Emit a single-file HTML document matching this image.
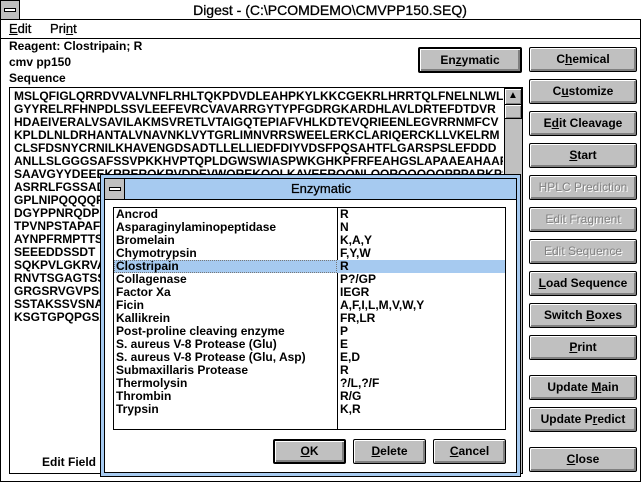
<!DOCTYPE html>
<html><head><style>
*{margin:0;padding:0;box-sizing:border-box}
body{width:641px;height:482px;background:#fff;position:relative;overflow:hidden;font-family:"Liberation Sans",Arial,sans-serif;font-weight:bold;font-size:12px;color:#000}
.a{position:absolute}
.btn{position:absolute;background:#c0c0c0;border:1px solid #000;border-radius:2px;box-shadow:inset 1px 1px 0 #fff,inset -2px -2px 0 #808080;text-align:center;font-size:12px;line-height:22px}
.dis{color:#808080;font-weight:normal;text-shadow:1px 1px 0 #fff}
.seq div{height:13px;line-height:13px;white-space:nowrap}
.lst div{height:13px;line-height:13px;white-space:nowrap}
u{text-decoration:underline}
</style></head><body>
<!-- main frame -->
<div class="a" style="left:0;top:0;width:641px;height:482px;border:1px solid #000"></div>
<div class="a" style="left:0;top:0;width:641px;height:20px;border-bottom:1px solid #000;background:#fff"></div>
<div class="a" style="left:0;top:0;width:20px;height:20px;background:#c0c0c0;border:1px solid #000"></div>
<div class="a" style="left:4px;top:8px;width:12px;height:4px;background:#fff;border:1px solid #000"></div>
<div class="a" style="left:20px;top:0;width:620px;height:19px;text-align:center;font-size:14px;font-weight:normal;line-height:20px;-webkit-text-stroke:0.3px #000">Digest - (C:\PCOMDEMO\CMVPP150.SEQ)</div>
<div class="a" style="left:9px;top:21px;font-size:13px;font-weight:normal;-webkit-text-stroke:0.3px #000"><u>E</u>dit</div>
<div class="a" style="left:50px;top:21px;font-size:13px;font-weight:normal;-webkit-text-stroke:0.3px #000">Pri<u>n</u>t</div>
<div class="a" style="left:0;top:38px;width:641px;height:1px;background:#000"></div>
<div class="a" style="left:9px;top:39px">Reagent: Clostripain; R</div>
<div class="a" style="left:9px;top:55px">cmv pp150</div>
<div class="a" style="left:9px;top:71px">Sequence</div>
<!-- sequence box -->
<div class="a" style="left:9px;top:87px;width:514px;height:387px;border:1px solid #000"></div>
<div class="a seq" style="left:14px;top:90px;width:489px;overflow:hidden">
<div>MSLQFIGLQRRDVVALVNFLRHLTQKPDVDLEAHPKYLKKCGEKRLHRRTQLFNELNLWL</div>
<div>GYYRELRFHNPDLSSVLEEFEVRCVAVARRGYTYPFGDRGKARDHLAVLDRTEFDTDVR</div>
<div>HDAEIVERALVSAVILAKMSVRETLVTAIGQTEPIAFVHLKDTEVQRIEENLEGVRRNMFCV</div>
<div>KPLDLNLDRHANTALVNAVNKLVYTGRLIMNVRRSWEELERKCLARIQERCKLLVKELRM</div>
<div>CLSFDSNYCRNILKHAVENGDSADTLLELLIEDFDIYVDSFPQSAHTFLGARSPSLEFDDD</div>
<div>ANLLSLGGGSAFSSVPKKHVPTQPLDGWSWIASPWKGHKPFRFEAHGSLAPAAEAHAAR</div>
<div>SAAVGYYDEEEKRREROKRVDDEVWQREKQQLKAVEERQQNLQQRQQQQQPPPARKPS</div>
<div>ASRRLFGSSAD</div><div>GPLNIPQQQQF</div><div>DGYPPNRQDP</div><div>TPVNPSTAPAF</div>
<div>AYNPFRMPTTS</div><div>SEEEDDSSDT</div><div>SQKPVLGKRVA</div><div>RNVTSGAGTSS</div>
<div>GRGSRVGVPSI</div><div>SSTAKSSVSNA</div><div>KSGTGPQPGSA</div>
</div>
<div class="a" style="left:42px;top:455px">Edit Field</div>
<!-- scrollbar -->
<div class="a" style="left:504px;top:88px;width:18px;height:385px;background:#c0c0c0;border-left:1px solid #000"></div>
<div class="a" style="left:504px;top:88px;width:18px;height:17px;background:#c0c0c0;border:1px solid #000;box-shadow:inset 1px 1px 0 #fff,inset -1px -1px 0 #808080;text-align:center;font-size:10px;line-height:14px">&#9650;</div>
<div class="a" style="left:504px;top:104px;width:18px;height:15px;background:#c0c0c0;border:1px solid #000;box-shadow:inset 1px 1px 0 #fff,inset -1px -1px 0 #808080"></div>
<!-- buttons -->
<div class="btn" style="left:418px;top:47px;width:104px;height:26px;border-width:2px;line-height:22px">En<u>z</u>ymatic</div>
<div class="btn" style="left:529px;top:47px;width:108px;height:25px"><span>C<u>h</u>emical</span></div>
<div class="btn" style="left:529px;top:79px;width:108px;height:25px">C<u>u</u>stomize</div>
<div class="btn" style="left:529px;top:111px;width:108px;height:25px">E<u>d</u>it Cleavage</div>
<div class="btn" style="left:529px;top:143px;width:108px;height:25px"><u>S</u>tart</div>
<div class="btn dis" style="left:529px;top:175px;width:108px;height:25px">HPLC Prediction</div>
<div class="btn dis" style="left:529px;top:207px;width:108px;height:25px">Edit Fragment</div>
<div class="btn dis" style="left:529px;top:239px;width:108px;height:25px">Edit Sequence</div>
<div class="btn" style="left:529px;top:271px;width:108px;height:25px"><u>L</u>oad Sequence</div>
<div class="btn" style="left:529px;top:303px;width:108px;height:25px">Switch <u>B</u>oxes</div>
<div class="btn" style="left:529px;top:335px;width:108px;height:25px"><u>P</u>rint</div>
<div class="btn" style="left:529px;top:375px;width:108px;height:25px">Update <u>M</u>ain</div>
<div class="btn" style="left:529px;top:407px;width:108px;height:25px">Update P<u>r</u>edict</div>
<div class="btn" style="left:529px;top:447px;width:108px;height:25px"><u>C</u>lose</div>
<!-- dialog -->
<div class="a" style="left:100px;top:174px;width:421px;height:303px;background:#a6caf0;border:1px solid #000"></div>
<div class="a" style="left:104px;top:178px;width:413px;height:295px;background:#fff;border:1px solid #000"></div>
<div class="a" style="left:104px;top:178px;width:413px;height:22px;background:#a6caf0;border:1px solid #000"></div>
<div class="a" style="left:104px;top:178px;width:21px;height:22px;background:#c0c0c0;border:1px solid #000"></div>
<div class="a" style="left:109px;top:187px;width:12px;height:4px;background:#fff;border:1px solid #000"></div>
<div class="a" style="left:125px;top:180px;width:392px;text-align:center;font-size:13px;font-weight:normal;-webkit-text-stroke:0.3px #000;line-height:18px">Enzymatic</div>
<div class="a" style="left:113px;top:207px;width:393px;height:223px;border:1px solid #000"></div>
<div class="a" style="left:337px;top:207px;width:1px;height:223px;background:#000"></div>
<div class="a" style="left:114px;top:260px;width:391px;height:13px;background:#a6caf0"></div>
<div class="a" style="left:114px;top:260px;width:223px;height:13px;border:1px dotted #777"></div>
<div class="a lst" style="left:116px;top:208px">
<div>Ancrod</div><div>Asparaginylaminopeptidase</div><div>Bromelain</div><div>Chymotrypsin</div><div>Clostripain</div><div>Collagenase</div><div>Factor Xa</div><div>Ficin</div><div>Kallikrein</div><div>Post-proline cleaving enzyme</div><div>S. aureus V-8 Protease (Glu)</div><div>S. aureus V-8 Protease (Glu, Asp)</div><div>Submaxillaris Protease</div><div>Thermolysin</div><div>Thrombin</div><div>Trypsin</div>
</div>
<div class="a lst" style="left:340px;top:208px">
<div>R</div><div>N</div><div>K,A,Y</div><div>F,Y,W</div><div>R</div><div>P?/GP</div><div>IEGR</div><div>A,F,I,L,M,V,W,Y</div><div>FR,LR</div><div>P</div><div>E</div><div>E,D</div><div>R</div><div>?/L,?/F</div><div>R/G</div><div>K,R</div>
</div>
<div class="btn" style="left:273px;top:439px;width:73px;height:25px;border-width:2px;line-height:21px"><u>O</u>K</div>
<div class="btn" style="left:353px;top:439px;width:73px;height:25px"><u>D</u>elete</div>
<div class="btn" style="left:433px;top:439px;width:73px;height:25px"><u>C</u>ancel</div>
</body></html>
